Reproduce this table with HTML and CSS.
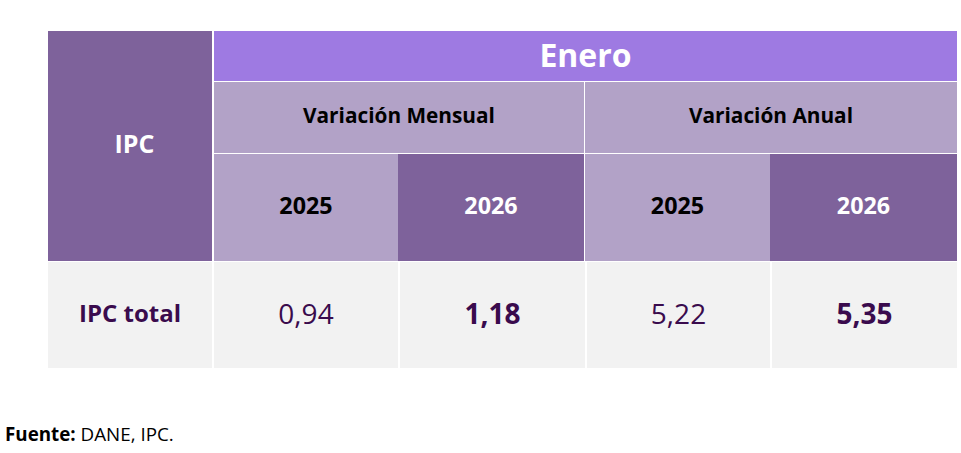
FILE: index.html
```html
<!DOCTYPE html>
<html lang="es">
<head>
<meta charset="utf-8">
<title>IPC Enero</title>
<link rel="stylesheet" href="styles.css">
</head>
<body>
<div class="page">
  <div class="grid">
    <div class="cell ipc-head">IPC</div>
    <div class="cell month">Enero</div>
    <div class="cell var var-m">Variación Mensual</div>
    <div class="cell var var-a">Variación Anual</div>
    <div class="cell year light">2025</div>
    <div class="cell year dark sep-r">2026</div>
    <div class="cell year light">2025</div>
    <div class="cell year dark">2026</div>
    <div class="cell data label">IPC total</div>
    <div class="cell data">0,94</div>
    <div class="cell data strong sep-l">1,18</div>
    <div class="cell data sep-l">5,22</div>
    <div class="cell data strong sep-l">5,35</div>
  </div>
  <p class="source"><b>Fuente:</b> DANE, IPC.</p>
</div>
</body>
</html>
```
FILE: styles.css
```css
* { box-sizing: border-box; }
html, body { margin: 0; padding: 0; background: #fff; }
body { font-family: "Open Sans", "Noto Sans", sans-serif; }
.page { padding: 31px 0 0 5px; }
.grid {
  margin-left: 43px;
  display: grid;
  grid-template-columns: 166px 184px 187px 185px 187px;
  grid-template-rows: 51px 72px 108px 106px;
  width: 909px;
}
.cell {
  display: flex;
  align-items: center;
  justify-content: center;
}
.ipc-head {
  grid-row: 1 / span 3;
  background: #7e629b;
  color: #fff;
  font-weight: 700;
  font-size: 25px;
  border-right: 2px solid #fff;
  border-bottom: 1px solid #fff;
  padding: 0 0 6px 9px;
}
.month {
  grid-column: 2 / span 4;
  background: #9e7ae2;
  color: #fff;
  font-weight: 700;
  font-size: 32px;
  border-bottom: 1px solid #fff;
  padding-bottom: 3px;
}
.var {
  grid-column: span 2;
  background: #b2a2c7;
  color: #000;
  font-weight: 700;
  font-size: 20.8px;
  border-bottom: 1px solid #fff;
  padding-bottom: 5px;
}
.var-m { border-right: 1px solid #fff; }
.year {
  font-weight: 700;
  font-size: 23.3px;
  border-bottom: 1px solid #fff;
  padding-bottom: 6px;
}
.year.light { background: #b2a2c7; color: #000; }
.year.dark { background: #7e629b; color: #fff; }
.sep-r { border-right: 1px solid #fff; }
.data {
  background: #f2f2f2;
  color: #3a0b4d;
  font-size: 28px;
  padding-bottom: 4px;
}
.data.label {
  font-weight: 700;
  font-size: 24px;
  border-right: 2px solid #fff;
  padding-bottom: 5px;
}
.data.strong { font-weight: 700; }
.sep-l { border-left: 2px solid #fff; }
.source {
  margin: 53px 0 0 0;
  font-size: 18.8px;
  line-height: 26px;
  color: #000;
}
.source b { font-weight: 700; }
```
